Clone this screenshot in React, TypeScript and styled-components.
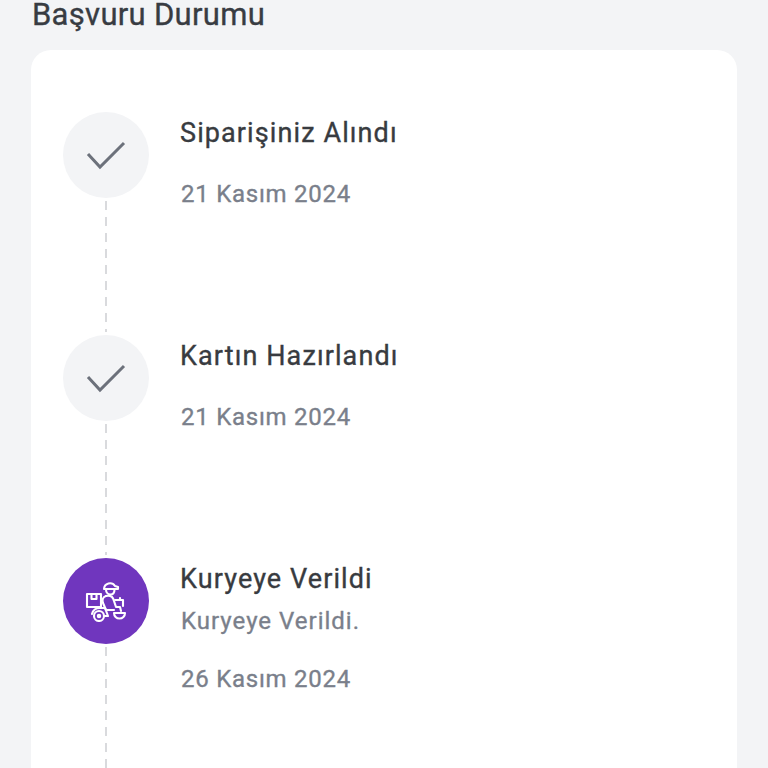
import React from 'react';
import styled, { createGlobalStyle } from 'styled-components';

interface Step {
  id: string;
  title: string;
  note?: string;
  date: string;
  active?: boolean;
}

const steps: Step[] = [
  { id: 'received', title: 'Siparişiniz Alındı', date: '21 Kasım 2024' },
  { id: 'ready', title: 'Kartın Hazırlandı', date: '21 Kasım 2024' },
  { id: 'courier', title: 'Kuryeye Verildi', note: 'Kuryeye Verildi.', date: '26 Kasım 2024', active: true },
];

const GlobalStyle = createGlobalStyle`
  html, body {
    margin: 0;
    padding: 0;
    height: 768px;
    overflow: hidden;
    background: #f3f4f6;
    font-family: Roboto, "Noto Sans", sans-serif;
  }
`;

const Page = styled.div`
  height: 768px;
  overflow: hidden;
  padding: 0 31px;
  box-sizing: border-box;
`;

const Heading = styled.h1`
  margin: 0 0 0 1px;
  height: 50px;
  font-size: 31px;
  line-height: 30px;
  font-weight: 400;
  color: #383c42;
  letter-spacing: 0.3px;
  -webkit-text-stroke: 0.35px #383c42;
`;

const Card = styled.section`
  background: #fff;
  border-radius: 20px 20px 0 0;
  padding: 62px 32px 0;
  height: 718px;
  box-sizing: border-box;
`;

const Row = styled.div`
  display: grid;
  grid-template-columns: 86px 1fr;
  column-gap: 31px;
  min-height: 223px;
`;

const Rail = styled.div`
  display: flex;
  flex-direction: column;
  align-items: center;
`;

const Circle = styled.div<{ $active?: boolean }>`
  width: 86px;
  height: 86px;
  flex: none;
  border-radius: 50%;
  display: flex;
  align-items: center;
  justify-content: center;
  background: ${({ $active }) => ($active ? '#7036be' : '#f3f4f6')};
  color: ${({ $active }) => ($active ? '#fff' : '#6c717b')};
`;

const Connector = styled.div`
  flex: 1;
  width: 2px;
  margin: 3px 0;
  background: repeating-linear-gradient(to bottom, #d9dadd 0 9px, transparent 9px 16px);
`;

const Body = styled.div`
  display: flex;
  flex-direction: column;
  padding-top: 6px;
`;

const Title = styled.div`
  font-size: 27px;
  line-height: 30px;
  font-weight: 400;
  color: #383b40;
  letter-spacing: 1.1px;
  -webkit-text-stroke: 0.35px #383b40;
`;

const Note = styled.div`
  margin: 12px 0 0 1px;
  font-size: 24px;
  line-height: 30px;
  font-weight: 400;
  color: #7a7f8b;
  letter-spacing: 1px;
  -webkit-text-stroke: 0.35px #7a7f8b;
`;

const DateText = styled.div<{ $tight?: boolean }>`
  margin: ${({ $tight }) => ($tight ? '28px' : '31px')} 0 0 1px;
  font-size: 24px;
  line-height: 30px;
  font-weight: 400;
  color: #7a7f8b;
  letter-spacing: 0.75px;
  -webkit-text-stroke: 0.35px #7a7f8b;
`;

const CheckIcon = () => (
  <svg width="40" height="30" viewBox="0 0 40 30" fill="none" stroke="currentColor" strokeWidth="3">
    <path d="M2 14 L14 27 L38 3" />
  </svg>
);

const CourierIcon = () => (
  <svg
    width="42"
    height="42"
    viewBox="0 0 42 42"
    fill="none"
    stroke="currentColor"
    strokeWidth="2.1"
    strokeLinecap="round"
    strokeLinejoin="round"
  >
    {/* helmet and face */}
    <path d="M19 9a6 6 0 0 1 11-3l3 1v2z" />
    <path d="M21 9.5c0 3 2 5 4.5 5s4-2 4-5" />
    {/* parcel */}
    <rect x="2" y="14" width="14" height="13" />
    <path d="M6.5 14v5h5v-5" />
    {/* rider */}
    <path d="M21 16c-3 1-4 4-3 7l3 7h8" />
    <path d="M21 16c4-1 7 1 8 5l2 6h4l1 4" />
    <path d="M30 20h8v6" />
    <path d="M35 20v-2" />
    {/* scooter */}
    <path d="M7 34c1-4 4-6 8-6h5l3 8h-4" />
    <circle cx="14" cy="36" r="5" />
    <circle cx="14" cy="36" r="1.2" />
    <path d="M29 33h11a5.5 5.5 0 0 1-11 0z" />
  </svg>
);

const App: React.FC = () => (
  <Page>
    <GlobalStyle />
    <Heading>Başvuru Durumu</Heading>
    <Card>
      {steps.map((step) => (
        <Row key={step.id}>
          <Rail>
            <Circle $active={step.active}>{step.active ? <CourierIcon /> : <CheckIcon />}</Circle>
            <Connector />
          </Rail>
          <Body>
            <Title>{step.title}</Title>
            {step.note && <Note>{step.note}</Note>}
            <DateText $tight={!!step.note}>{step.date}</DateText>
          </Body>
        </Row>
      ))}
    </Card>
  </Page>
);

export default App;
